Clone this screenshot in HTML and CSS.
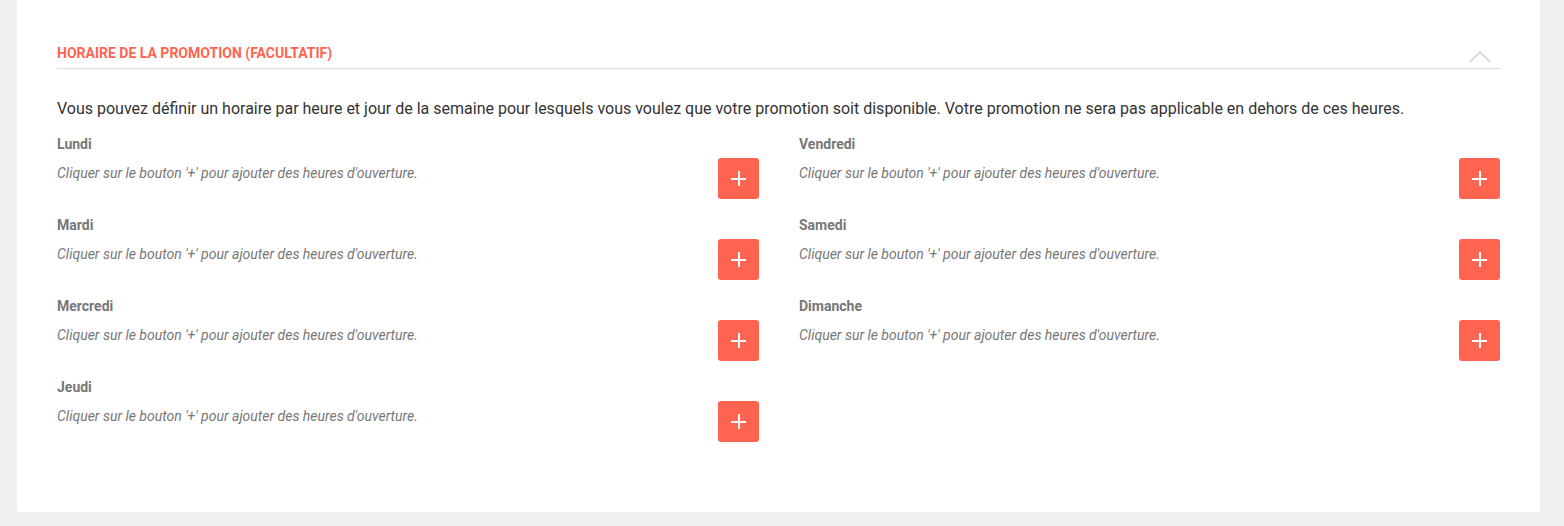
FILE: index.html
```html
<!DOCTYPE html>
<html lang="fr">
<head>
<meta charset="utf-8">
<link rel="stylesheet" href="styles.css">
</head>
<body>
<div class="card">
  <div class="section-head">
    <h2 class="section-title">HORAIRE DE LA PROMOTION (FACULTATIF)</h2>
    <svg class="chevron" width="22" height="13" viewBox="0 0 22 13"><path d="M1 12 L11 2 L21 12" fill="none" stroke="#dcdcdc" stroke-width="2.2"/></svg>
  </div>
  <p class="intro">Vous pouvez définir un horaire par heure et jour de la semaine pour lesquels vous voulez que votre promotion soit disponible. Votre promotion ne sera pas applicable en dehors de ces heures.</p>
  <div class="days">
    <div class="col">
      <div class="day"><div class="day-info"><div class="day-name">Lundi</div><div class="day-hint">Cliquer sur le bouton '+' pour ajouter des heures d'ouverture.</div></div><button class="add"><span class="plus"></span></button></div>
      <div class="day"><div class="day-info"><div class="day-name">Mardi</div><div class="day-hint">Cliquer sur le bouton '+' pour ajouter des heures d'ouverture.</div></div><button class="add"><span class="plus"></span></button></div>
      <div class="day"><div class="day-info"><div class="day-name">Mercredi</div><div class="day-hint">Cliquer sur le bouton '+' pour ajouter des heures d'ouverture.</div></div><button class="add"><span class="plus"></span></button></div>
      <div class="day"><div class="day-info"><div class="day-name">Jeudi</div><div class="day-hint">Cliquer sur le bouton '+' pour ajouter des heures d'ouverture.</div></div><button class="add"><span class="plus"></span></button></div>
    </div>
    <div class="col">
      <div class="day"><div class="day-info"><div class="day-name">Vendredi</div><div class="day-hint">Cliquer sur le bouton '+' pour ajouter des heures d'ouverture.</div></div><button class="add"><span class="plus"></span></button></div>
      <div class="day"><div class="day-info"><div class="day-name">Samedi</div><div class="day-hint">Cliquer sur le bouton '+' pour ajouter des heures d'ouverture.</div></div><button class="add"><span class="plus"></span></button></div>
      <div class="day"><div class="day-info"><div class="day-name">Dimanche</div><div class="day-hint">Cliquer sur le bouton '+' pour ajouter des heures d'ouverture.</div></div><button class="add"><span class="plus"></span></button></div>
    </div>
  </div>
</div>
</body>
</html>
```

FILE: styles.css
```css
* { box-sizing: border-box; }
html, body { margin: 0; padding: 0; }
body {
  background: #f0f0f0;
  font-family: Roboto, "Liberation Sans", sans-serif;
  width: 1564px;
  height: 526px;
  overflow: hidden;
}
.card {
  margin-left: 17px;
  width: 1523px;
  height: 512px;
  background: #fff;
  border-radius: 0 0 3px 3px;
  padding: 44px 40px 0 40px;
}
.section-head {
  display: flex;
  justify-content: space-between;
  align-items: flex-end;
  border-bottom: 1px solid #dcdcdc;
  height: 25px;
}
.section-title {
  margin: 0 0 7px 0;
  font-size: 14px;
  font-weight: 700;
  color: #ff6450;
  line-height: 16px;
}
.chevron {
  margin-right: 9px;
  margin-bottom: 5px;
}
.intro {
  margin: 30px 0 0 0;
  font-size: 16px;
  color: #333;
  line-height: 20px;
}
.days {
  display: grid;
  grid-template-columns: 702px 701px;
  column-gap: 40px;
  margin-top: 17px;
}
.col { display: flex; flex-direction: column; }
.day {
  display: flex;
  justify-content: space-between;
  align-items: flex-start;
  height: 81px;
}
.day-name {
  font-size: 14px;
  font-weight: 700;
  color: #777;
  line-height: 16px;
}
.day-hint {
  margin-top: 13px;
  font-size: 14px;
  font-style: italic;
  color: #777;
  line-height: 16px;
}
.add {
  margin-top: 22px;
  width: 41px;
  height: 41px;
  border: none;
  border-radius: 3px;
  background: #ff6450;
  display: flex;
  align-items: center;
  justify-content: center;
  padding: 0;
}
.plus {
  position: relative;
  width: 15px;
  height: 15px;
  display: block;
}
.plus::before, .plus::after {
  content: "";
  position: absolute;
  background: #fff;
}
.plus::before { left: 0; top: 6.5px; width: 15px; height: 2px; }
.plus::after { top: 0; left: 6.5px; width: 2px; height: 15px; }
```
